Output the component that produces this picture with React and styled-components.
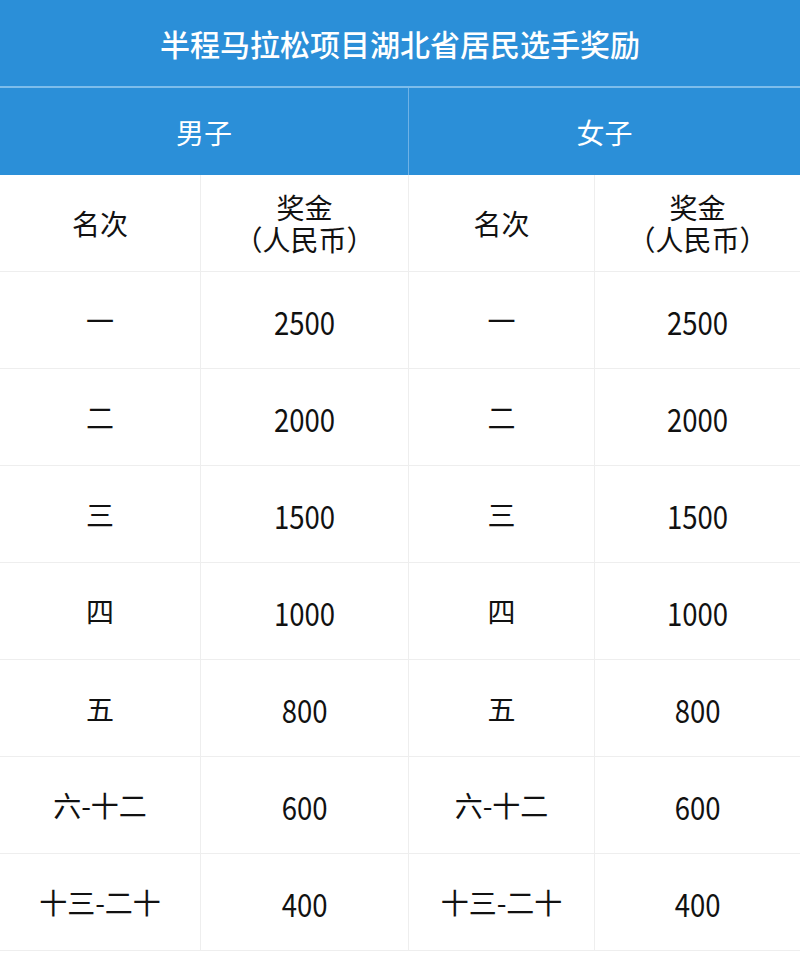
import React from 'react';
import styled, { createGlobalStyle } from 'styled-components';

const GlobalStyle = createGlobalStyle`
  html, body {
    margin: 0;
    padding: 0;
    background: #ffffff;
  }
  body {
    font-family: "Noto Sans CJK SC", "Noto Sans", sans-serif;
    color: #111111;
  }
`;

const Wrapper = styled.div`
  width: 800px;
  height: 960px;
  background: #ffffff;
`;

const Title = styled.div`
  height: 86px;
  background: #2b8fd8;
  color: #ffffff;
  font-size: 30px;
  font-weight: 500;
  display: flex;
  align-items: center;
  justify-content: center;
  border-bottom: 2px solid #7dbdeb;
`;

const GroupRow = styled.div`
  display: grid;
  grid-template-columns: 409px 1fr;
  height: 87px;
  background: #2b8fd8;
`;

const GroupCell = styled.div`
  display: flex;
  align-items: center;
  justify-content: center;
  color: #ffffff;
  font-size: 28px;
  border-right: ${(p) => (p.last ? 'none' : '1px solid #6fb2e6')};
`;

const Grid = styled.div`
  display: grid;
  grid-template-columns: 201px 208px 186px 1fr;
  grid-auto-rows: 97px;
`;

const Cell = styled.div`
  display: flex;
  flex-direction: column;
  align-items: center;
  justify-content: center;
  font-size: 28px;
  line-height: 32px;
  text-align: center;
  border-bottom: 1px solid #eeeeee;
  border-right: ${(p) => (p.last ? 'none' : '1px solid #eeeeee')};
`;

/* the amounts are set in a narrow face in the original */
const Amount = styled.span`
  display: inline-block;
  font-size: 32px;
  padding-top: 2px;
  transform: scaleX(0.86);
`;

const HeadLine = styled.span`
  display: block;
  height: 32px;
`;

const rows = [
  ['一', '2500'],
  ['二', '2000'],
  ['三', '1500'],
  ['四', '1000'],
  ['五', '800'],
  ['六-十二', '600'],
  ['十三-二十', '400'],
];

function PrizeHead({ last }) {
  return (
    <Cell last={last}>
      <HeadLine>奖金</HeadLine>
      <HeadLine>（人民币）</HeadLine>
    </Cell>
  );
}

export default function App() {
  return (
    <Wrapper>
      <GlobalStyle />
      <Title>半程马拉松项目湖北省居民选手奖励</Title>
      <GroupRow>
        <GroupCell>男子</GroupCell>
        <GroupCell last>女子</GroupCell>
      </GroupRow>
      <Grid>
        <Cell>名次</Cell>
        <PrizeHead />
        <Cell>名次</Cell>
        <PrizeHead last />
        {rows.map(([rank, prize]) => (
          <React.Fragment key={rank}>
            <Cell>{rank}</Cell>
            <Cell><Amount>{prize}</Amount></Cell>
            <Cell>{rank}</Cell>
            <Cell last><Amount>{prize}</Amount></Cell>
          </React.Fragment>
        ))}
      </Grid>
    </Wrapper>
  );
}
